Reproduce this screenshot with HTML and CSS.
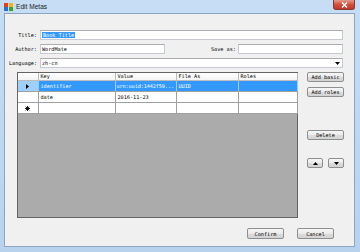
FILE: index.html
```html
<!DOCTYPE html>
<html lang="en">
<head>
  <meta charset="UTF-8" />
  <title>Edit Metas</title>
  <link rel="stylesheet" href="styles.css">
</head>
<body>

  <div class="window">

    <!-- Title bar -->
    <div class="titlebar">
      <svg class="app-icon" width="9" height="8" viewBox="0 0 9 8">
        <rect x="0" y="0" width="4" height="4" fill="#e04020"/>
        <rect x="5" y="0" width="4" height="4" fill="#f0b020"/>
        <rect x="0" y="4" width="4" height="4" fill="#2a70d0"/>
        <rect x="5" y="4" width="4" height="4" fill="#40a030"/>
      </svg>
      <span class="window-title">Edit Metas</span>
      <div class="close-btn">
        <svg width="7" height="6" viewBox="0 0 7 6">
          <path d="M1 0.5 L6 5.5 M6 0.5 L1 5.5" stroke="#fff" stroke-width="1.4"/>
        </svg>
      </div>
    </div>

    <div class="client">

      <!-- Fields -->
      <div class="form">
        <label class="field-label">Title:</label>
        <div class="text-box"><span class="selected-text">Book Title</span></div>

        <label class="field-label">Author:</label>
        <div class="field-line">
          <div class="text-box author-box">WordMate</div>
          <label class="field-label save-label">Save as:</label>
          <div class="text-box save-box"></div>
        </div>

        <label class="field-label">Language:</label>
        <div class="text-box combo">
          <span>zh-cn</span>
          <svg width="5" height="3" viewBox="0 0 5 3"><path d="M0 0 H5 L2.5 3 Z" fill="#000"/></svg>
        </div>
      </div>

      <!-- Grid and side buttons -->
      <div class="main">
        <div class="grid">
          <table class="meta-table">
            <colgroup>
              <col style="width: 20px">
              <col style="width: 77px">
              <col style="width: 61px">
              <col style="width: 62px">
              <col style="width: 59px">
            </colgroup>
            <thead>
              <tr>
                <th class="row-head"></th>
                <th>Key</th>
                <th>Value</th>
                <th>File As</th>
                <th>Roles</th>
              </tr>
            </thead>
            <tbody>
              <tr class="selected">
                <td class="row-head current">
                  <svg width="3" height="5" viewBox="0 0 3 5"><path d="M0 0 L3 2.5 L0 5 Z" fill="#000"/></svg>
                </td>
                <td>identifier</td>
                <td class="tight">urn:uuid:1442f59...</td>
                <td>UUID</td>
                <td></td>
              </tr>
              <tr>
                <td class="row-head"></td>
                <td>date</td>
                <td>2016-11-23</td>
                <td></td>
                <td></td>
              </tr>
              <tr>
                <td class="row-head">
                  <svg width="5" height="5" viewBox="0 0 5 5"><path d="M2.5 0 V5 M0 2.5 H5 M0.7 0.7 L4.3 4.3 M4.3 0.7 L0.7 4.3" stroke="#000" stroke-width="0.9"/></svg>
                </td>
                <td></td>
                <td></td>
                <td></td>
                <td></td>
              </tr>
            </tbody>
          </table>
        </div>

        <div class="side">
          <button class="btn">Add basic</button>
          <button class="btn add-roles">Add roles</button>
          <button class="btn delete">Delete</button>
          <div class="arrows">
            <button class="btn arrow">
              <svg width="5" height="3" viewBox="0 0 5 3"><path d="M0 3 H5 L2.5 0 Z" fill="#000"/></svg>
            </button>
            <button class="btn arrow">
              <svg width="5" height="3" viewBox="0 0 5 3"><path d="M0 0 H5 L2.5 3 Z" fill="#000"/></svg>
            </button>
          </div>
        </div>
      </div>

      <!-- Dialog buttons -->
      <div class="footer">
        <button class="btn">Confirm</button>
        <button class="btn">Cancel</button>
      </div>

    </div>
  </div>

</body>
</html>
```

FILE: styles.css
```css
body {
  margin: 0;
  width: 360px;
  height: 252px;
  overflow: hidden;
  font-family: "DejaVu Sans Mono", "Liberation Mono", monospace;
  font-size: 5.2px;
  color: #000;
}
.window {
  width: 360px;
  height: 252px;
  box-sizing: border-box;
  padding: 0 5px 5px 4px;
  background: linear-gradient(#c6ddf5, #b8d2ee);
  display: flex;
  flex-direction: column;
}
.titlebar {
  height: 13px;
  display: flex;
  align-items: flex-start;
}
.app-icon {
  margin: 3px 0 0 0;
}
.window-title {
  margin: 2px 0 0 3px;
  font-family: "Liberation Sans", Arial, sans-serif;
  font-size: 6.6px;
  line-height: 9px;
  color: #1e1e1e;
}
.close-btn {
  margin-left: auto;
  width: 22px;
  height: 10px;
  box-sizing: border-box;
  border: 1px solid #8a3a32;
  border-top: none;
  border-radius: 0 0 3px 3px;
  background: linear-gradient(#e29a8e, #d0503e 50%, #c0392b);
  display: flex;
  align-items: center;
  justify-content: center;
}
.client {
  flex: 1;
  background-color: #f0f0f0;
  border: 1px solid #8ca5c0;
  display: flex;
  flex-direction: column;
}
.form {
  display: grid;
  grid-template-columns: 32px 1fr;
  column-gap: 3px;
  row-gap: 4px;
  padding: 16px 11px 0 0;
}
.field-label {
  text-align: right;
  line-height: 10px;
  white-space: nowrap;
}
.text-box {
  height: 10px;
  box-sizing: border-box;
  background-color: #fff;
  border: 1px solid #c5cad3;
  border-top-color: #abadb3;
  padding-left: 1px;
  line-height: 8px;
  white-space: nowrap;
  overflow: hidden;
}
.selected-text {
  background-color: #3399ff;
  color: #fff;
  padding: 0 1px;
}
.field-line {
  display: flex;
  align-items: center;
}
.author-box {
  width: 125px;
}
.save-label {
  margin-left: auto;
  margin-right: 2px;
}
.save-box {
  width: 105px;
}
.combo {
  display: flex;
  align-items: center;
  justify-content: space-between;
  padding-right: 2px;
}
.main {
  display: flex;
  margin-top: 4px;
  padding-left: 12px;
}
.grid {
  width: 281px;
  height: 146px;
  box-sizing: border-box;
  background-color: #ababab;
  border: 1px solid #646464;
}
.meta-table {
  width: 279px;
  table-layout: fixed;
  border-collapse: collapse;
}
.meta-table th,
.meta-table td {
  padding: 0 0 0 2px;
  text-align: left;
  font-weight: normal;
  white-space: nowrap;
  overflow: hidden;
  border-right: 1px solid #a0a0a0;
  border-bottom: 1px solid #a0a0a0;
}
.meta-table td.tight {
  padding-left: 1px;
  letter-spacing: -0.1px;
}
.meta-table th {
  height: 7px;
  line-height: 7px;
  background: linear-gradient(#ffffff, #f4f4f4);
  border-color: #bcbcbc;
}
.meta-table td {
  height: 10px;
  line-height: 10px;
  background-color: #fff;
}
.meta-table .row-head {
  padding: 0;
  text-align: center;
  background-color: #fff;
}
.meta-table .row-head svg {
  display: block;
  margin: 0 auto;
}
.meta-table tr.selected td {
  background-color: #3399ff;
  color: #fff;
  border-right-color: #9cc9f7;
}
.meta-table tr.selected td.current {
  background-color: #9fd0fb;
}
.side {
  margin-left: 9px;
  width: 37px;
  display: flex;
  flex-direction: column;
}
.btn {
  height: 10px;
  width: 37px;
  padding: 0;
  box-sizing: border-box;
  border: 1px solid #8e8f8f;
  border-radius: 2px;
  background: linear-gradient(#f6f6f6, #eaeaea 50%, #dcdcdc 50%, #d3d3d3);
  font-family: "DejaVu Sans Mono", "Liberation Mono", monospace;
  font-size: 5.2px;
  line-height: 8px;
  color: #000;
  display: flex;
  align-items: center;
  justify-content: center;
}
.add-roles {
  margin-top: 5px;
}
.delete {
  margin-top: 33px;
}
.arrows {
  margin-top: 18px;
  display: flex;
  justify-content: space-between;
}
.arrow {
  width: 16px;
}
.footer {
  display: flex;
  justify-content: flex-end;
  gap: 13px;
  margin-top: 10px;
  padding-right: 20px;
}
.footer .btn {
  height: 11px;
}
```
